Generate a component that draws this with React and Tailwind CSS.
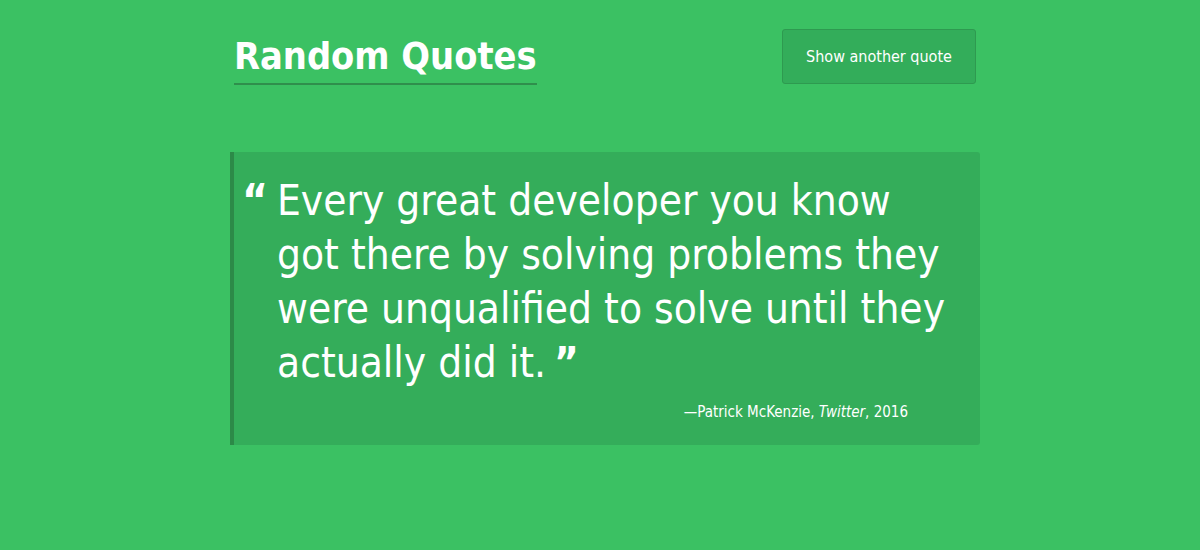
export default function App() {
  const font = { fontFamily: '"DejaVu Sans Condensed", "DejaVu Sans", sans-serif' };
  return (
    <div className="min-h-[550px] w-full bg-[#3bc163] text-white" style={font}>
      <div className="mx-auto w-[760px] pl-[10px] pt-[29px]">
        <header className="flex items-start justify-between">
          <h1 className="ml-[4px] mt-[7px] inline-block border-b-2 border-[#2f8f4c] pb-[7px] text-[37.6px] font-bold leading-[40px]">
            Random Quotes
          </h1>
          <button className="mr-[4px] h-[55px] w-[194px] rounded-[3px] border border-[#2e9a50] bg-[#33ad5a] text-[16px] text-white">
            Show another quote
          </button>
        </header>

        <blockquote className="mt-[67px] rounded-r-[3px] border-l-4 border-[#2c8a48] bg-[#34ad5a] pb-[21px] pl-[8px] pr-[30px] pt-[22px]">
          <div className="flex">
            <span className="w-[35px] shrink-0 text-[44px] font-bold leading-[54px]">“</span>
            <p className="text-[42px] leading-[54px]">
              Every great developer you know got there by solving problems they were unqualified to solve until they actually did it.
              <span className="ml-[8px] font-bold">”</span>
            </p>
          </div>
          <footer className="mt-[11px] pr-[42px] text-right text-[15px]">
            —Patrick McKenzie, <cite className="italic">Twitter</cite>, 2016
          </footer>
        </blockquote>
      </div>
    </div>
  );
}
